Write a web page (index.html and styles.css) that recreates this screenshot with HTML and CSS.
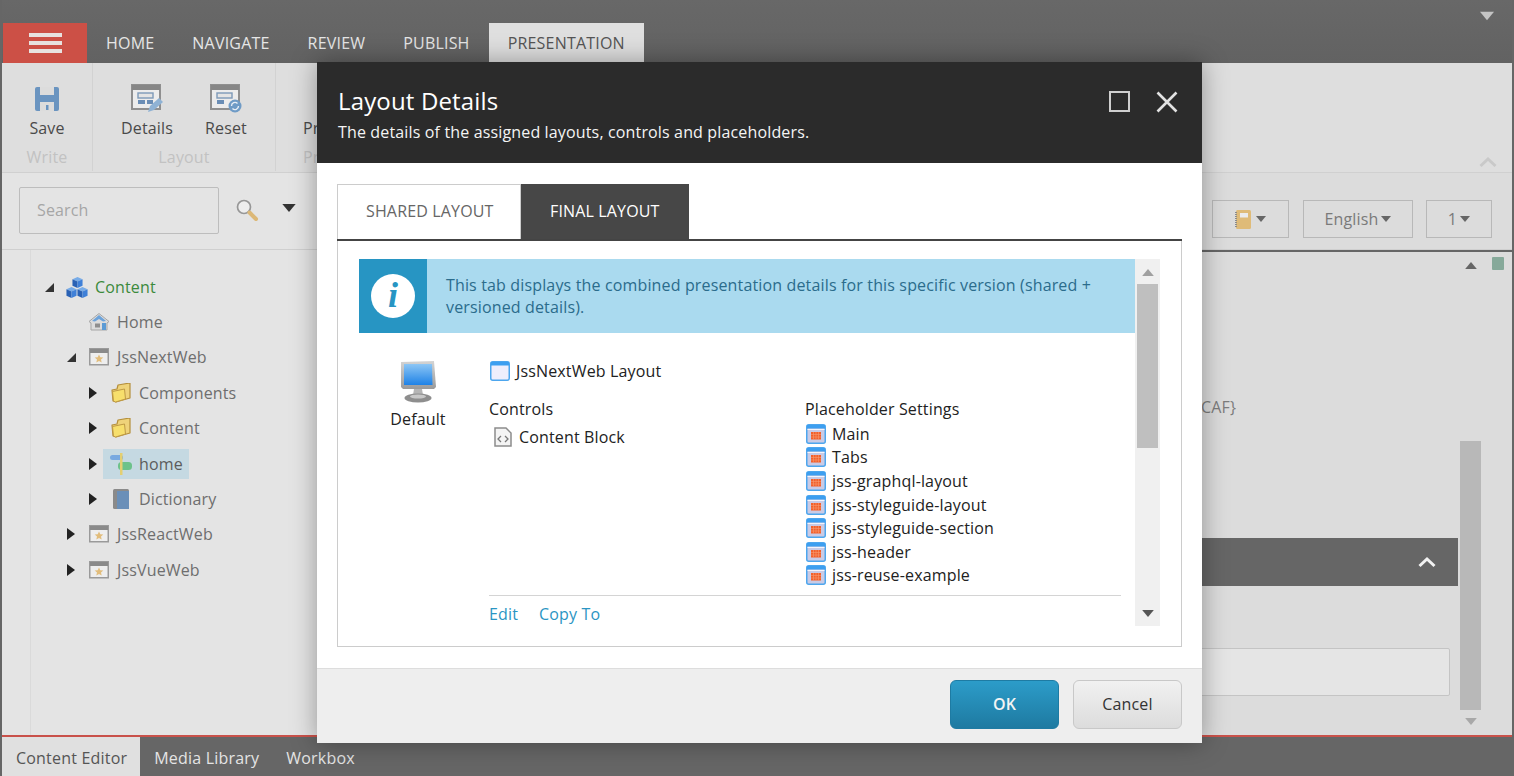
FILE: index.html
```html
<!DOCTYPE html>
<html lang="en">
  <head>
    <meta charset="UTF-8" />
    <title>Layout Details</title>
    <link rel="stylesheet" href="styles.css">
  </head>
  <body>
    <svg class="defs" width="0" height="0">
      <defs>
        <symbol id="site" viewBox="0 0 20 18">
          <rect x="0.75" y="0.75" width="18.5" height="16" fill="#eeeeee" stroke="#9a9a9a" stroke-width="1.5"/>
          <rect x="1" y="1" width="18" height="4" fill="#8a8a8a"/>
          <path d="M10 6.5l1.3 2.8 3 .3-2.3 2 .7 3-2.7-1.6-2.7 1.6.7-3-2.3-2 3-.3z" fill="#e2bd7c"/>
        </symbol>
        <symbol id="folder" viewBox="0 0 20 20">
          <path d="M1 7l5-1 1-4 12-2 0 15-14 4-3-1z" fill="#efd37a" stroke="#b58f3c" stroke-width="1.2" stroke-linejoin="round"/>
          <path d="M1.500 8.500l12-2.500 1 10-10 3-2-1z" fill="#f7df6c" stroke="#bf9a45" stroke-width="1"/>
        </symbol>
        <symbol id="placeholder" viewBox="0 0 20 20">
          <rect x="0.75" y="0.75" width="18.5" height="18.5" rx="2" fill="#c9cbe6" stroke="#4da6ee" stroke-width="1.5"/>
          <rect x="1" y="1" width="18" height="3.5" fill="#3d9ff0"/>
          <rect x="1.5" y="5" width="17" height="1" fill="#f4f4fb"/>
          <rect x="5" y="8" width="10" height="7.5" fill="#f2602c"/>
          <path d="M7.500 8v7.500M10 8v7.500M12.500 8v7.500M5 10.500h10M5 13h10" stroke="#f79a72" stroke-width="0.6"/>
        </symbol>
        <symbol id="cube" viewBox="0 0 12 12">
          <path d="M6 0l5.500 2.500L6 5 .5 2.500z" fill="#78ace8"/>
          <path d="M.5 2.500L6 5v7L.5 9.500z" fill="#2a62b5"/>
          <path d="M11.500 2.500L6 5v7l5.500-2.500z" fill="#3f80d8"/>
        </symbol>
        <symbol id="caret" viewBox="0 0 10 6">
          <path d="M0 0h10L5 6z"/>
        </symbol>
      </defs>
    </svg>

    <div class="app">
      <header class="topbar">
        <svg class="top-arrow" width="14" height="10"><use href="#caret"/></svg>
        <nav class="tabs">
          <a class="menu-btn"><span></span><span></span><span></span></a>
          <a class="tab">Home</a>
          <a class="tab">Navigate</a>
          <a class="tab">Review</a>
          <a class="tab">Publish</a>
          <a class="tab active">Presentation</a>
        </nav>
      </header>

      <section class="ribbon">
        <div class="group group-write">
          <div class="group-items">
            <div class="rb-item">
              <svg width="26" height="26" viewBox="0 0 26 26"><path d="M1 3q0-2 2-2h20q2 0 2 2v20q0 2-2 2H3q-2 0-2-2z" fill="#6a94c0"/><rect x="6" y="1" width="14" height="8" fill="#dcdcdc"/><rect x="6" y="16" width="14" height="9" fill="#dcdcdc"/><rect x="12" y="19" width="2.5" height="5" fill="#6a94c0"/></svg>
              <span>Save</span>
            </div>
          </div>
          <div class="group-name">Write</div>
        </div>
        <div class="group group-layout">
          <div class="group-items">
            <div class="rb-item">
              <svg width="32" height="30" viewBox="0 0 32 30"><rect x="1" y="1" width="28" height="24" fill="#ececec" stroke="#8f8f8f" stroke-width="2"/><rect x="1" y="1" width="28" height="5" fill="#868686"/><rect x="7" y="9" width="15" height="5" fill="#e4e4e4" stroke="#7d99b8" stroke-width="1.4"/><rect x="7" y="16" width="7" height="4" fill="#6a8db5"/><rect x="16" y="16" width="6" height="4" fill="#6a8db5"/><path d="M17 28l2-6 9-8 4 4-9 8z" fill="#8fb2d4"/></svg>
              <span>Details</span>
            </div>
            <div class="rb-item">
              <svg width="32" height="30" viewBox="0 0 32 30"><rect x="1" y="1" width="28" height="24" fill="#ececec" stroke="#8f8f8f" stroke-width="2"/><rect x="1" y="1" width="28" height="5" fill="#868686"/><rect x="7" y="9" width="15" height="5" fill="#e4e4e4" stroke="#7d99b8" stroke-width="1.4"/><rect x="7" y="16" width="7" height="4" fill="#6a8db5"/><circle cx="25" cy="22" r="6.500" fill="#6f9bc6"/><path d="M21.500 22a3.500 3.500 0 0 1 6-2.500M28.500 22a3.500 3.500 0 0 1-6 2.500" fill="none" stroke="#e8eef5" stroke-width="1.400"/></svg>
              <span>Reset</span>
            </div>
          </div>
          <div class="group-name">Layout</div>
        </div>
        <div class="group group-preview">
          <div class="group-items">
            <div class="rb-item"><i class="no-icon"></i><span>Pr</span></div>
          </div>
          <div class="group-name">Pr</div>
        </div>
        <svg class="ribbon-collapse" width="18" height="12" viewBox="0 0 18 12"><path d="M1.500 10L9 3l7.500 7" fill="none" stroke="#c9c9c9" stroke-width="3"/></svg>
      </section>

      <section class="searchbar">
        <div class="search-left">
          <div class="search-box">Search</div>
          <svg class="search-icon" width="24" height="24" viewBox="0 0 24 24"><circle cx="9" cy="9" r="6.500" fill="#eeeeee" stroke="#979797" stroke-width="1.700"/><path d="M14.500 14.500l6.500 6.500" stroke="#dcb877" stroke-width="4" stroke-linecap="round"/></svg>
          <svg class="search-caret" width="14" height="8"><use href="#caret"/></svg>
        </div>
        <div class="search-right">
          <div class="ver-btn btn-book">
            <svg width="16" height="19" viewBox="0 0 16 19"><rect x="1" y="0" width="15" height="19" rx="1.500" fill="#dfbb78"/><rect x="5" y="3" width="8" height="4.500" fill="#ececec"/><path d="M1 2v15" stroke="#8a8a8a" stroke-width="2" stroke-dasharray="1 1"/></svg>
            <svg class="btn-caret" width="10" height="6"><use href="#caret"/></svg>
          </div>
          <div class="ver-btn btn-lang">English<svg class="btn-caret" width="10" height="6"><use href="#caret"/></svg></div>
          <div class="ver-btn btn-num">1<svg class="btn-caret" width="10" height="6"><use href="#caret"/></svg></div>
        </div>
      </section>

      <main class="main">
        <aside class="tree-pane">
          <div class="tree-gutter"></div>
          <ul class="tree">
            <li class="row lvl-0 root">
              <i class="open"></i>
              <span class="cubes">
                <svg width="11" height="11"><use href="#cube"/></svg>
                <svg width="11" height="11"><use href="#cube"/></svg>
                <svg width="11" height="11"><use href="#cube"/></svg>
              </span>
              <span>Content</span>
            </li>
            <li class="row lvl-1">
              <i class="none"></i>
              <svg width="20" height="18" viewBox="0 0 20 18"><path d="M10 .5L0 8.500l2 1.500v7h16v-7l2-1.500z" fill="#dcdcdc" stroke="#a5a5a5" stroke-linejoin="round"/><path d="M3 8l7-6 7 6-3 .5-4-2.500-4 2.500z" fill="#6da3da"/><rect x="13" y="10" width="4" height="7" fill="#5b9bd5"/><rect x="6" y="10.500" width="5" height="4" fill="#8e8e8e"/></svg>
              <span>Home</span>
            </li>
            <li class="row lvl-1">
              <i class="open"></i>
              <svg width="20" height="18"><use href="#site"/></svg>
              <span>JssNextWeb</span>
            </li>
            <li class="row lvl-2">
              <i class="closed"></i>
              <svg width="20" height="20"><use href="#folder"/></svg>
              <span>Components</span>
            </li>
            <li class="row lvl-2">
              <i class="closed"></i>
              <svg width="20" height="20"><use href="#folder"/></svg>
              <span>Content</span>
            </li>
            <li class="row lvl-2 selected">
              <i class="closed"></i>
              <div class="sel-box">
                <svg width="22" height="22" viewBox="0 0 22 22"><rect x="0" y="2" width="13" height="5" rx="2.500" fill="#78a9e0"/><rect x="8" y="9" width="14" height="8" rx="3.500" fill="#6cc28a"/><rect x="10" y="0" width="2.500" height="22" fill="#e4cf71"/></svg>
                <span>home</span>
              </div>
            </li>
            <li class="row lvl-2">
              <i class="closed"></i>
              <svg width="20" height="20" viewBox="0 0 20 20"><rect x="2" y="0" width="16" height="20" rx="1.500" fill="#8a8a8a"/><rect x="6" y="2" width="12" height="18" fill="#6a8fb8"/></svg>
              <span>Dictionary</span>
            </li>
            <li class="row lvl-1">
              <i class="closed"></i>
              <svg width="20" height="18"><use href="#site"/></svg>
              <span>JssReactWeb</span>
            </li>
            <li class="row lvl-1">
              <i class="closed"></i>
              <svg width="20" height="18"><use href="#site"/></svg>
              <span>JssVueWeb</span>
            </li>
          </ul>
        </aside>

        <div class="content">
          <div class="content-main">
            <div class="item-id">CAF}</div>
            <div class="section-bar">
              <svg width="18" height="12" viewBox="0 0 18 12"><path d="M1.500 10L9 3l7.500 7" fill="none" stroke="#f2f2f2" stroke-width="3"/></svg>
            </div>
            <div class="field-box"></div>
          </div>
          <div class="content-scroll">
            <svg class="arrow-up" width="12" height="7" viewBox="0 0 10 6"><path d="M0 6h10L5 0z" fill="#666"/></svg>
            <div class="thumb"></div>
            <svg class="arrow-down" width="12" height="7"><use href="#caret"/></svg>
          </div>
          <div class="content-gutter"><div class="status-dot"></div></div>
        </div>
      </main>

      <footer class="bottombar">
        <a class="bt-tab active">Content Editor</a>
        <a class="bt-tab">Media Library</a>
        <a class="bt-tab">Workbox</a>
      </footer>

      <div class="dialog">
        <div class="dlg-head">
          <div>
            <h1>Layout Details</h1>
            <p>The details of the assigned layouts, controls and placeholders.</p>
          </div>
          <div class="dlg-actions">
            <span class="dlg-max"></span>
            <svg width="22" height="22" viewBox="0 0 22 22"><path d="M1.500 1.500l19 19M20.500 1.500l-19 19" stroke="#e2e2e2" stroke-width="2.600"/></svg>
          </div>
        </div>

        <div class="dlg-body">
          <div class="dlg-tabs">
            <a class="dlg-tab">SHARED LAYOUT</a>
            <a class="dlg-tab active">FINAL LAYOUT</a>
          </div>
          <div class="dlg-panel">
            <div class="panel-scroll">
              <div class="panel-content">
                <div class="info-bar">
                  <div class="info-icon"><span>i</span></div>
                  <div class="info-text">This tab displays the combined presentation details for this specific version (shared + versioned details).</div>
                </div>
                <div class="device">
                  <div class="device-col">
                    <svg width="36" height="42" viewBox="0 0 36 42">
                      <defs>
                        <linearGradient id="screen" x1="0" y1="0" x2="0" y2="1"><stop offset="0" stop-color="#8cc6f5"/><stop offset="1" stop-color="#1f82e6"/></linearGradient>
                        <linearGradient id="bezel" x1="0" y1="0" x2="0" y2="1"><stop offset="0" stop-color="#d4d4d4"/><stop offset="1" stop-color="#9a9a9a"/></linearGradient>
                      </defs>
                      <path d="M1 1l33-1 2 26-2 2H3l-2-2z" fill="url(#bezel)"/>
                      <path d="M4 3h28l.5 21H4z" fill="url(#screen)"/>
                      <path d="M14 28h8l1 6H13z" fill="#b5b5b5"/>
                      <ellipse cx="18" cy="37" rx="13.500" ry="4.500" fill="#8e8e8e"/>
                      <ellipse cx="18" cy="35.500" rx="8" ry="2" fill="#c8c8c8"/>
                    </svg>
                    <span>Default</span>
                  </div>
                  <div class="render-col">
                    <div class="layout-name">
                      <svg width="20" height="20" viewBox="0 0 20 20"><rect x="0.750" y="0.750" width="18.500" height="18.500" rx="2" fill="#eeeefc" stroke="#4da6ee" stroke-width="1.500"/><rect x="1" y="1" width="18" height="3.500" fill="#3d9ff0"/></svg>
                      <span>JssNextWeb Layout</span>
                    </div>
                    <div class="lists">
                      <div class="controls">
                        <div class="list-title">Controls</div>
                        <div class="control">
                          <svg width="18" height="20" viewBox="0 0 18 20"><path d="M1 1h11l5 5v13H1z" fill="#f4f4f4" stroke="#8c8c8c" stroke-width="1.500"/><path d="M7 9l-3 3 3 3M11 9l3 3-3 3" fill="none" stroke="#777" stroke-width="1.300"/></svg>
                          <span>Content Block</span>
                        </div>
                      </div>
                      <div class="placeholders">
                        <div class="list-title">Placeholder Settings</div>
                        <ul class="ph-list">
                          <li><svg width="20" height="20"><use href="#placeholder"/></svg>Main</li>
                          <li><svg width="20" height="20"><use href="#placeholder"/></svg>Tabs</li>
                          <li><svg width="20" height="20"><use href="#placeholder"/></svg>jss-graphql-layout</li>
                          <li><svg width="20" height="20"><use href="#placeholder"/></svg>jss-styleguide-layout</li>
                          <li><svg width="20" height="20"><use href="#placeholder"/></svg>jss-styleguide-section</li>
                          <li><svg width="20" height="20"><use href="#placeholder"/></svg>jss-header</li>
                          <li><svg width="20" height="20"><use href="#placeholder"/></svg>jss-reuse-example</li>
                        </ul>
                      </div>
                    </div>
                    <div class="render-links">
                      <a>Edit</a>
                      <a>Copy To</a>
                    </div>
                  </div>
                </div>
              </div>
              <div class="panel-bar">
                <svg class="bar-up" width="12" height="7" viewBox="0 0 10 6"><path d="M0 6h10L5 0z" fill="#a0a0a0"/></svg>
                <div class="bar-thumb"></div>
                <svg class="bar-down" width="12" height="7"><use href="#caret"/></svg>
              </div>
            </div>
          </div>
        </div>

        <div class="dlg-foot">
          <button class="btn btn-ok">OK</button>
          <button class="btn btn-cancel">Cancel</button>
        </div>
      </div>
    </div>
  </body>
</html>
```
FILE: styles.css
```css
* {
  box-sizing: border-box;
}

html,
body {
  margin: 0;
  height: 100%;
  overflow: hidden;
}

body {
  font-family: "Open Sans", sans-serif;
  font-size: 16px;
  letter-spacing: 0.15px;
  color: #222;
}

ul {
  list-style: none;
  margin: 0;
  padding: 0;
}

.defs {
  position: absolute;
}

.app {
  position: relative;
  width: 1514px;
  height: 776px;
  display: flex;
  flex-direction: column;
  background: #666;
  padding: 0 2px;
  overflow: hidden;
}

/* top bar */
.topbar {
  position: relative;
  height: 63px;
  flex: none;
  padding-top: 23px;
  background: linear-gradient(#686868, #626262);
}

.top-arrow {
  position: absolute;
  top: 11px;
  right: 18px;
  fill: #c4c4c4;
}

.tabs {
  display: flex;
  height: 40px;
}

.menu-btn {
  width: 84px;
  margin-left: 1px;
  background: #cc5046;
  display: flex;
  flex-direction: column;
  align-items: center;
  justify-content: center;
  gap: 4px;
}

.menu-btn span {
  display: block;
  width: 33px;
  height: 4px;
  background: #e8e2e0;
}

.tab {
  padding: 0 19px;
  line-height: 40px;
  letter-spacing: 0.2px;
  text-transform: uppercase;
  color: #e6e6e6;
}

.tab.active {
  background: #dfdfdf;
  color: #555;
}

/* ribbon */
.ribbon {
  position: relative;
  height: 110px;
  flex: none;
  display: flex;
  background: #dedede;
  border-bottom: 1px solid #d0d0d0;
}

.group {
  display: flex;
  flex-direction: column;
  height: 108px;
  border-right: 1px solid #d2d2d2;
}

.group-write {
  width: 91px;
}

.group-layout {
  width: 183px;
}

.group-preview {
  width: 140px;
  border-right: 0;
}

.group-items {
  flex: 1;
  display: flex;
  justify-content: center;
  gap: 32px;
}

.group-preview .group-items {
  justify-content: flex-start;
  padding-left: 27px;
}

.rb-item {
  display: flex;
  flex-direction: column;
  align-items: center;
  padding-top: 21px;
  color: #4a4a4a;
}

.rb-item svg,
.no-icon {
  height: 30px;
  display: block;
}

.rb-item span {
  margin-top: 3px;
  line-height: 22px;
}

.group-name {
  height: 25px;
  text-align: center;
  color: #c2c2c2;
  line-height: 22px;
}

.group-preview .group-name {
  text-align: left;
  padding-left: 27px;
}

.ribbon-collapse {
  position: absolute;
  right: 15px;
  bottom: 4px;
}

/* search row */
.searchbar {
  height: 77px;
  flex: none;
  display: flex;
  justify-content: space-between;
  background: linear-gradient(90deg, #e4e4e4 0, #e4e4e4 600px, #dcdcdc 600px);
  border-bottom: 1px solid #cfcfcf;
}

.search-left {
  display: flex;
  align-items: center;
  padding: 0 0 2px 17px;
}

.search-box {
  width: 200px;
  height: 47px;
  border: 1px solid #bdbdbd;
  border-radius: 2px;
  padding-left: 17px;
  line-height: 45px;
  color: #a6a6a6;
}

.search-icon {
  margin-left: 16px;
}

.search-caret {
  margin-left: 23px;
  margin-bottom: 4px;
  fill: #333;
}

.search-right {
  display: flex;
  gap: 14px;
  padding: 27px 20px 0 0;
}

.ver-btn {
  height: 38px;
  border: 1px solid #b8b8b8;
  display: flex;
  align-items: center;
  justify-content: center;
  color: #7a7a7a;
}

.btn-book {
  width: 77px;
  gap: 5px;
}

.btn-lang {
  width: 110px;
  gap: 3px;
}

.btn-num {
  width: 66px;
  gap: 3px;
  margin-left: -1px;
}

.btn-caret {
  fill: #666;
}

/* main area */
.main {
  flex: 1;
  display: flex;
  min-height: 0;
  border-top: 2px solid #666;
}

.tree-pane {
  width: 600px;
  flex: none;
  display: flex;
  background: #e4e4e4;
  margin-top: -2px;
  position: relative;
}

.tree-gutter {
  width: 29px;
  border-right: 1px solid #dadada;
}

.tree {
  padding-top: 19px;
}

.row {
  height: 35.400px;
  display: flex;
  align-items: center;
  color: #6e6e6e;
}

.row svg {
  margin-right: 8px;
  flex: none;
}

.row i {
  width: 22px;
  flex: none;
  height: 12px;
  position: relative;
}

.lvl-0 {
  padding-left: 14px;
}

.lvl-1 {
  padding-left: 36px;
}

.lvl-2 {
  padding-left: 58px;
}

.root {
  color: #3c8a3c;
}

.cubes {
  width: 20px;
  height: 20px;
  margin-right: 8px;
  display: flex;
  flex-wrap: wrap;
  justify-content: center;
  gap: 0;
  line-height: 0;
}

.cubes svg {
  margin: 0 0 -1px;
}

.cubes svg:first-child {
  margin: 0 4px -1px;
}

.cubes svg:nth-child(2) {
  margin-left: -1px;
}

.cubes svg:nth-child(3) {
  margin-right: -1px;
}

.open::before {
  content: "";
  position: absolute;
  left: 0;
  top: 2px;
  border-bottom: 9px solid #333;
  border-left: 9px solid transparent;
}

.closed::before {
  content: "";
  position: absolute;
  left: 0;
  top: 0;
  border-left: 8px solid #222;
  border-top: 6px solid transparent;
  border-bottom: 6px solid transparent;
}

.selected {
  color: #5c5c5c;
}

.sel-box {
  display: flex;
  align-items: center;
  width: 86px;
  height: 30px;
  margin-left: -8px;
  padding-left: 7px;
  background: #c5d9e2;
}

.sel-box svg {
  margin-right: 7px;
}

.content {
  flex: 1;
  display: flex;
  background: #dcdcdc;
  min-width: 0;
}

.content-main {
  flex: 1;
  min-width: 0;
  padding-top: 144px;
}

.item-id {
  padding-left: 599px;
  line-height: 22px;
  color: #7c7c7c;
}

.section-bar {
  height: 48px;
  margin-top: 120px;
  background: #666;
  display: flex;
  align-items: center;
  justify-content: flex-end;
  padding-right: 22px;
}

.field-box {
  height: 48px;
  margin: 62px 8px 0 0;
  border: 1px solid #c4c4c4;
  border-radius: 2px;
  background: #e5e5e5;
}

.content-scroll {
  width: 25px;
  flex: none;
  display: flex;
  flex-direction: column;
  align-items: center;
  padding-top: 10px;
}

.arrow-up {
  flex: none;
}

.thumb {
  width: 21px;
  height: 269px;
  margin-top: 172px;
  background: #b8b8b8;
}

.arrow-down {
  margin-top: 8px;
  fill: #a8a8a8;
}

.content-gutter {
  width: 29px;
  flex: none;
  padding: 5px 0 0 9px;
}

.status-dot {
  width: 12px;
  height: 13px;
  border-radius: 1px;
  background: #86a99a;
}

/* bottom bar */
.bottombar {
  height: 41px;
  flex: none;
  display: flex;
  border-top: 2px solid #c9514a;
  background: #666;
  line-height: 39px;
}

.bt-tab {
  padding: 2px 13px 0 14px;
  letter-spacing: 0.2px;
  color: #e4e4e4;
}

.bt-tab.active {
  background: #e0e0e0;
  color: #555;
}

/* dialog */
.dialog {
  position: absolute;
  left: 317px;
  top: 62px;
  width: 885px;
  height: 681px;
  display: flex;
  flex-direction: column;
  background: #fff;
  box-shadow: 0 0 24px rgba(0, 0, 0, 0.35);
}

.dlg-head {
  height: 101px;
  flex: none;
  background: #2b2b2b;
  display: flex;
  justify-content: space-between;
  padding: 22px 24px 0 21px;
  color: #fff;
}

.dlg-head h1 {
  margin: 0;
  font-size: 24px;
  font-weight: 400;
  line-height: 34px;
}

.dlg-head p {
  margin: 3px 0 0;
  line-height: 22px;
  color: #f4f4f4;
}

.dlg-actions {
  display: flex;
  gap: 26px;
  padding-top: 7px;
  align-items: flex-start;
}

.dlg-max {
  width: 21px;
  height: 21px;
  border: 2px solid #cfcfcf;
}

.dlg-body {
  flex: 1;
  padding: 21px 20px 21px;
  min-height: 0;
  display: flex;
  flex-direction: column;
}

.dlg-tabs {
  display: flex;
  height: 57px;
  flex: none;
  border-bottom: 2px solid #444;
}

.dlg-tab {
  width: 184px;
  height: 55px;
  line-height: 53px;
  padding-left: 28px;
  color: #666;
  border: 1px solid #ccc;
  border-bottom: 0;
}

.dlg-tab.active {
  width: 168px;
  background: #474747;
  border-color: #474747;
  color: #fff;
}

.dlg-panel {
  flex: 1;
  min-height: 0;
  border: 1px solid #ccc;
  border-top: 0;
  padding: 18px 21px 20px;
}

.panel-scroll {
  height: 100%;
  display: flex;
}

.panel-content {
  flex: 1;
  min-width: 0;
}

.panel-bar {
  width: 25px;
  flex: none;
  background: #f0f0f0;
  display: flex;
  flex-direction: column;
  align-items: center;
}

.bar-up {
  margin-top: 10px;
  flex: none;
}

.bar-thumb {
  width: 21px;
  height: 164px;
  margin-top: 8px;
  background: #bfbfbf;
}

.bar-down {
  margin-top: auto;
  margin-bottom: 9px;
  fill: #555;
}

.info-bar {
  height: 74px;
  display: flex;
  background: #aadaef;
}

.info-icon {
  width: 68px;
  flex: none;
  background: #2795c3;
  display: flex;
  align-items: center;
  justify-content: center;
}

.info-icon span {
  width: 44px;
  height: 44px;
  border-radius: 50%;
  background: #fff;
  color: #2795c3;
  font-family: "Liberation Serif", serif;
  font-size: 36px;
  font-style: italic;
  font-weight: 700;
  line-height: 42px;
  text-align: center;
}

.info-text {
  padding: 15px 24px 0 19px;
  line-height: 22px;
  color: #2b6c8c;
}

.device {
  display: flex;
  padding-top: 27px;
}

.device-col {
  width: 130px;
  flex: none;
  display: flex;
  flex-direction: column;
  align-items: center;
  gap: 5px;
  padding-top: 1px;
  padding-right: 12px;
}

.device-col span {
  line-height: 22px;
}

.render-col {
  width: 632px;
  flex: none;
}

.layout-name {
  display: flex;
  align-items: center;
  gap: 6px;
  height: 22px;
  padding-left: 1px;
}

.lists {
  display: flex;
  padding-top: 16px;
  height: 214px;
  border-bottom: 1px solid #d4d4d4;
}

.controls {
  width: 316px;
  flex: none;
}

.list-title {
  line-height: 22px;
}

.control {
  display: flex;
  align-items: center;
  gap: 7px;
  margin-top: 6px;
  padding-left: 5px;
}

.ph-list {
  margin-top: 2px;
}

.ph-list li {
  display: flex;
  align-items: center;
  gap: 6px;
  height: 23.600px;
  padding-left: 1px;
}

.render-links {
  display: flex;
  gap: 21px;
  padding-top: 7px;
  line-height: 22px;
  color: #2b95c3;
}

.dlg-foot {
  height: 75px;
  flex: none;
  background: #eee;
  border-top: 1px solid #ddd;
  display: flex;
  justify-content: flex-end;
  gap: 14px;
  padding: 11px 20px 0 0;
}

.btn {
  width: 109px;
  height: 49px;
  padding: 0 0 2px;
  border-radius: 6px;
  font-family: inherit;
  font-size: 16px;
  letter-spacing: 0.15px;
}

.btn-ok {
  border: 1px solid #1e7ba3;
  background: linear-gradient(#2c9cc9, #1e7aa1);
  color: #f4f4f4;
  font-weight: 600;
}

.btn-cancel {
  border: 1px solid #c8c8c8;
  background: linear-gradient(#f1f1f1, #dcdcdc);
  color: #333;
}
```
